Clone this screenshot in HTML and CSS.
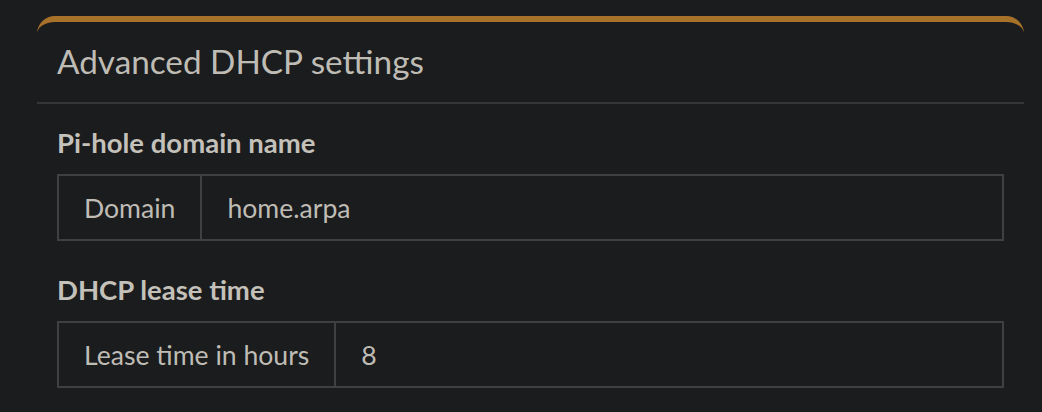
FILE: index.html
```html
<!DOCTYPE html>
<html lang="en">
<head>
<meta charset="utf-8">
<title>Advanced DHCP settings</title>
<link rel="stylesheet" href="styles.css">
</head>
<body>
<div class="page">
  <section class="box">
    <header class="box-header">
      <h3 class="box-title">Advanced DHCP settings</h3>
    </header>
    <div class="box-body">
      <div class="form-group">
        <label class="field-label">Pi-hole domain name</label>
        <div class="input-group">
          <span class="addon">Domain</span>
          <input class="control" type="text" value="home.arpa">
        </div>
      </div>
      <div class="form-group">
        <label class="field-label">DHCP lease time</label>
        <div class="input-group">
          <span class="addon">Lease time in hours</span>
          <input class="control" type="text" value="8">
        </div>
      </div>
    </div>
  </section>
</div>
</body>
</html>
```

FILE: styles.css
```css
html, body {
  margin: 0;
  padding: 0;
  background: #1b1c1e;
}

body {
  font-family: Lato, "Liberation Sans", sans-serif;
  color: #bfbcb5;
}

.page {
  padding: 16px 18px 0 37px;
}

.box {
  border-top: 6px solid #a8712a;
  border-radius: 18px 18px 0 0;
  background: #1b1c1e;
}

.box-header {
  height: 80px;
  display: flex;
  align-items: center;
  padding: 0 20px;
  border-bottom: 2px solid #353638;
}

.box-title {
  margin: 0;
  font-size: 33.3px;
  font-weight: 400;
  color: #bfbcb5;
  line-height: 1;
}

.box-body {
  padding: 19px 20px 0 20px;
  display: flex;
  flex-direction: column;
  gap: 29px;
}

.form-group {
  display: flex;
  flex-direction: column;
  gap: 11px;
}

.field-label {
  font-size: 27.5px;
  font-weight: 700;
  line-height: 40px;
  color: #c4c1ba;
}

.input-group {
  display: flex;
  height: 67px;
  box-sizing: border-box;
  border: 2px solid #3f4042;
}

.addon {
  display: flex;
  align-items: center;
  padding: 0 25px 0 25px;
  border-right: 2px solid #3f4042;
  font-size: 26.6px;
  color: #bfbcb5;
}

.control {
  flex: 1;
  min-width: 0;
  border: 0;
  outline: 0;
  background: transparent;
  padding: 0 25px;
  font-family: inherit;
  font-size: 26.6px;
  color: #bfbcb5;
}
```
